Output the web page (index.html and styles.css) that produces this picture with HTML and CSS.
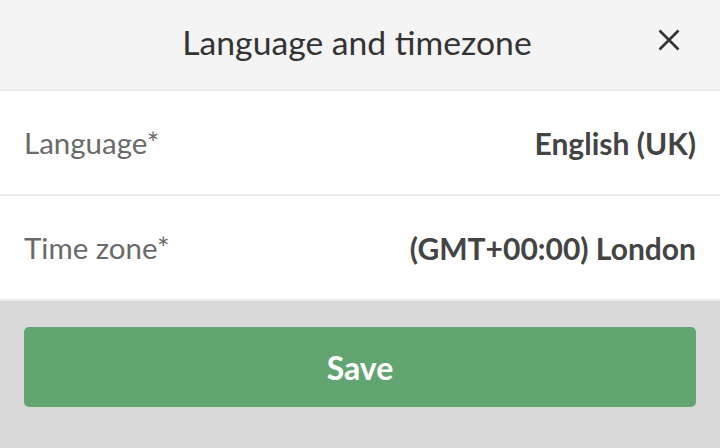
FILE: index.html
```html
<!DOCTYPE html>
<html>
<head>
<meta charset="utf-8">
<link rel="stylesheet" href="styles.css">
</head>
<body>
<div class="dialog">
  <div class="header">
    <div class="title">Language and timezone</div>
    <button class="close" aria-label="Close">
      <svg width="22" height="22" viewBox="0 0 22 22"><path d="M1.5 1.5 L20.5 20.5 M20.5 1.5 L1.5 20.5" stroke="#333" stroke-width="2.6" fill="none"/></svg>
    </button>
  </div>
  <div class="row">
    <span class="label">Language*</span>
    <span class="value">English (UK)</span>
  </div>
  <div class="row">
    <span class="label">Time zone*</span>
    <span class="value">(GMT+00:00) London</span>
  </div>
  <div class="footer">
    <button class="save">Save</button>
  </div>
</div>
</body>
</html>
```
FILE: styles.css
```css
* { box-sizing: border-box; }
html, body { margin: 0; padding: 0; }
body {
  width: 720px;
  height: 448px;
  font-family: Lato, "Noto Sans", sans-serif;
  background: #d9d9d9;
  overflow: hidden;
}
.dialog { display: flex; flex-direction: column; height: 448px; }
.header {
  height: 91px;
  background: #f4f4f4;
  border-bottom: 2px solid #ebebeb;
  display: flex;
  align-items: center;
  justify-content: center;
  padding-right: 6px;
  position: relative;
}
.title {
  font-size: 33.7px;
  color: #333;
  padding-bottom: 6px;
}
.close {
  position: absolute;
  right: 40px;
  top: 29px;
  width: 22px;
  height: 22px;
  padding: 0;
  border: 0;
  background: none;
  display: flex;
}
.row {
  height: 105px;
  background: #fff;
  border-bottom: 2px solid #ebebeb;
  display: flex;
  align-items: center;
  justify-content: space-between;
  padding: 0 24px 0 24px;
}
.label { font-size: 29.5px; color: #6a6a6a; }
.value { font-size: 30px; color: #444; font-weight: 700; }
.footer {
  flex: 1;
  background: #d9d9d9;
  padding: 26px 24px 0;
}
.save {
  width: 100%;
  height: 80px;
  border: 0;
  border-radius: 5px;
  background: #63a570;
  color: #fff;
  font-family: Lato, "Noto Sans", sans-serif;
  font-size: 32px;
  font-weight: 700;
}
```
